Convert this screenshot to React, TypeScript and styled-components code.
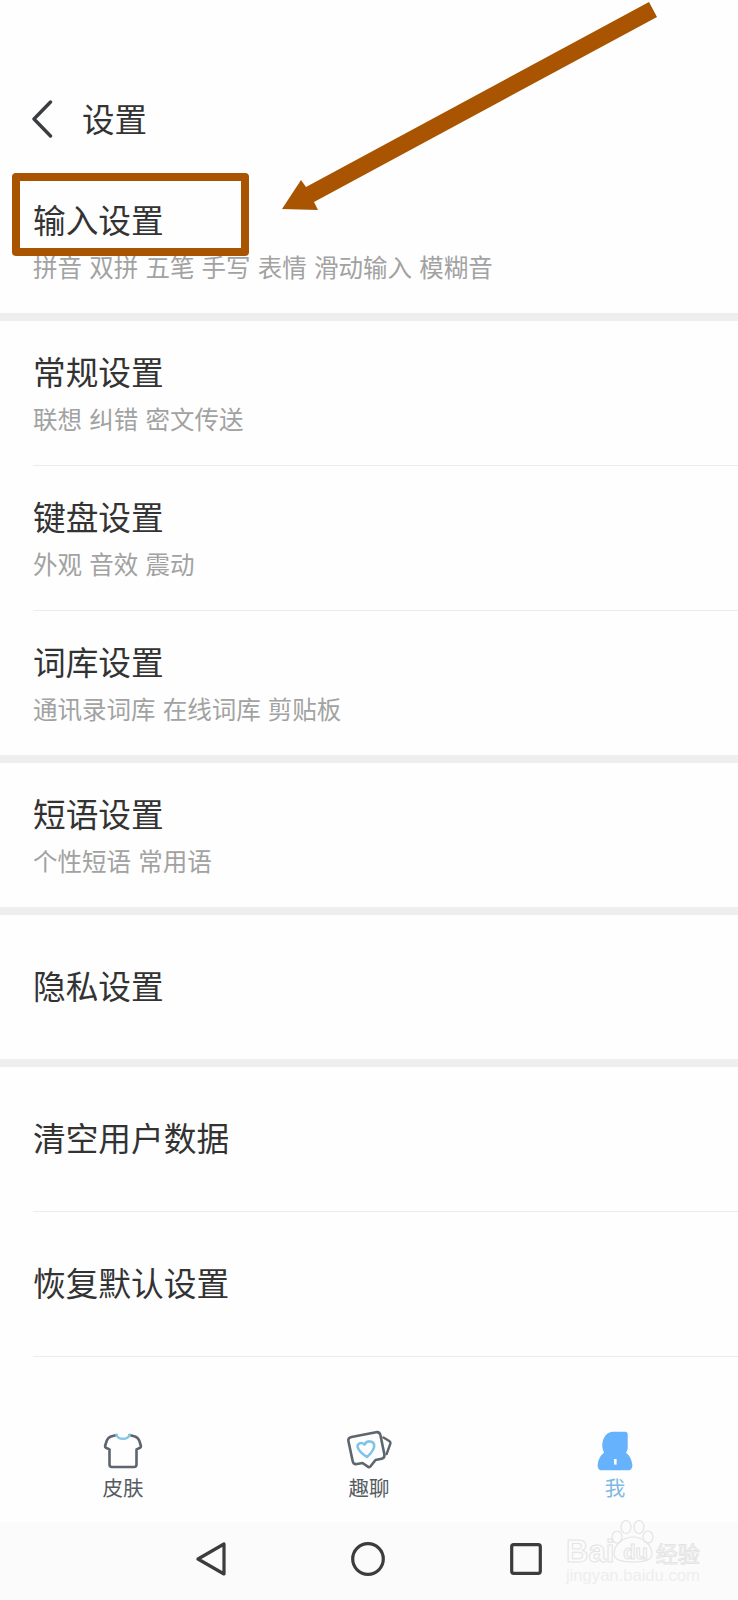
import styled, { createGlobalStyle } from 'styled-components';

interface ISettingRow {
  title: string;
  desc?: string;
}

const sections: ISettingRow[][] = [
  [{ title: '输入设置', desc: '拼音 双拼 五笔 手写 表情 滑动输入 模糊音' }],
  [
    { title: '常规设置', desc: '联想 纠错 密文传送' },
    { title: '键盘设置', desc: '外观 音效 震动' },
    { title: '词库设置', desc: '通讯录词库 在线词库 剪贴板' },
  ],
  [{ title: '短语设置', desc: '个性短语 常用语' }],
  [{ title: '隐私设置' }],
];

const lastSection: ISettingRow[] = [{ title: '清空用户数据' }, { title: '恢复默认设置' }];

const GlobalStyle = createGlobalStyle`
  html, body {
    margin: 0;
    padding: 0;
    background: #fff;
  }
  * {
    box-sizing: border-box;
  }
`;

const Page = styled.div`
  position: relative;
  width: 738px;
  height: 1600px;
  overflow: hidden;
  background: #fefefe;
  font-family: "Noto Sans CJK SC", "Noto Sans", sans-serif;
`;

const Header = styled.header`
  display: flex;
  align-items: center;
  gap: 29px;
  height: 169px;
  padding: 69px 0 0 31px;
  color: #333;
`;

const HeaderTitle = styled.h1`
  margin: 0 0 2px;
  font-size: 32.5px;
  font-weight: 400;
  line-height: 40px;
  color: #333;
`;

const Section = styled.section<{ $thick: boolean }>`
  border-bottom: ${props => (props.$thick ? '8px solid #eeeeee' : 'none')};
`;

const Row = styled.div<{ $single: boolean }>`
  display: flex;
  flex-direction: column;
  justify-content: center;
  height: 144px;
  padding: ${props => (props.$single ? '0 0 5px 33px' : '4px 0 0 33px')};
`;

const RowTitle = styled.div`
  font-size: 32.7px;
  line-height: 48px;
  color: #333;
`;

const RowDesc = styled.div`
  margin-top: -1px;
  font-size: 24.5px;
  line-height: 50px;
  color: #a2a2a2;
  word-spacing: 1.7px;
`;

const Rule = styled.div`
  height: 1px;
  margin-left: 33px;
  background: #ececec;
`;

const TabBar = styled.nav`
  display: grid;
  grid-template-columns: repeat(3, 246px);
  height: 165px;
  padding-top: 73px;
`;

const Tab = styled.div<{ $active?: boolean }>`
  display: flex;
  flex-direction: column;
  align-items: center;
  color: ${props => (props.$active ? '#7db9e2' : '#555b61')};
`;

const TabIcon = styled.div`
  display: flex;
  align-items: center;
  justify-content: center;
  height: 42px;
`;

const TabLabel = styled.span`
  font-size: 20.5px;
  line-height: 30px;
`;

const NavBar = styled.div`
  display: flex;
  align-items: center;
  justify-content: center;
  gap: 125px;
  height: 78px;
  padding-bottom: 4px;
  background: #fbfbfb;
`;

const Annotation = styled.div`
  position: absolute;
  left: 12px;
  top: 173px;
  width: 237px;
  height: 83px;
  border: 8px solid #a85400;
  border-radius: 4px;
`;

const Arrow = styled.svg`
  position: absolute;
  left: 270px;
  top: 0;
`;

const Watermark = styled.div`
  position: absolute;
  left: 566px;
  top: 1520px;
  width: 134px;
  font-family: "Liberation Sans", Arial, sans-serif;
  color: #fbfbfb;
  -webkit-text-stroke: 1px #e4e4e4;
`;

const Paw = styled.svg`
  position: absolute;
  left: 44px;
  top: 0;
`;

const WatermarkBrand = styled.div`
  display: flex;
  align-items: center;
  height: 44px;
  padding-top: 19px;
  font-size: 31px;
  line-height: 26px;
  font-weight: 700;
`;

const WatermarkDu = styled.span`
  position: relative;
  font-size: 20px;
  margin: 0 8px 0 9px;
`;

const WatermarkCjk = styled.span`
  font-family: "Noto Sans CJK SC", sans-serif;
  font-size: 22px;
  font-weight: 400;
`;

const WatermarkUrl = styled.div`
  margin-top: 3px;
  font-size: 16.6px;
  line-height: 18px;
  white-space: nowrap;
  color: #eeeeee;
  -webkit-text-stroke: 0;
`;

function BackIcon() {
  return (
    <svg width="22" height="38" viewBox="0 0 22 38" fill="none">
      <path d="M19.5 2 L3 19 L19.5 36" stroke="#3a3d42" strokeWidth="3.4" strokeLinecap="round" strokeLinejoin="round" />
    </svg>
  );
}

function ShirtIcon() {
  return (
    <svg width="40" height="38" viewBox="0 0 40 38" fill="none">
      <path
        d="M13.5 3 L8 4.4 C6 5 4.6 6.5 3.8 8.5 L2.2 13.5 C1.9 14.7 2.4 15.6 3.4 16 L6.5 17.4 L6.5 32.5 C6.5 34 7.3 35 9 35 L31 35 C32.7 35 33.5 34 33.5 32.5 L33.5 17.4 L36.6 16 C37.6 15.6 38.1 14.7 37.8 13.5 L36.2 8.5 C35.4 6.5 34 5 32 4.4 L26.5 3"
        stroke="#5d666f"
        strokeWidth="2.6"
        strokeLinejoin="round"
        strokeLinecap="round"
      />
      <path d="M13.5 3 C15 8 25 8 26.5 3" stroke="#86c8e8" strokeWidth="2.6" strokeLinecap="round" />
    </svg>
  );
}

function ChatIcon() {
  return (
    <svg width="46" height="42" viewBox="0 0 46 42" fill="none">
      <path
        d="M5.5 7 L30 2.2 C32.4 1.8 33.8 2.7 34.4 5 L38.4 24.5 C38.8 26.8 38 28.2 35.7 28.7 L29.5 30 L24.4 36.5 C23.8 37.2 23 37.3 22.2 36.8 L16.5 33 L11 34 C8.6 34.4 7.2 33.4 6.7 31.2 L2.4 11 C1.9 8.8 3.2 7.5 5.5 7 Z"
        stroke="#5d666f"
        strokeWidth="2.6"
        strokeLinejoin="round"
      />
      <path d="M37.5 7.5 L43.2 11 C44.4 11.8 44.7 12.7 44.3 13.9 L40.6 24" stroke="#5d666f" strokeWidth="2.4" strokeLinecap="round" strokeLinejoin="round" />
      <path
        d="M21 27 C16.5 24 12.5 20.5 11.7 17.2 C10.9 13.6 15.1 11.4 18.5 14.6 C20.7 10.2 27.1 10.6 28.1 14.4 C28.9 18 25.5 23 21 27 Z"
        stroke="#7fc4e8"
        strokeWidth="2.6"
        strokeLinejoin="round"
      />
    </svg>
  );
}

function PersonIcon() {
  return (
    <svg width="36" height="40" viewBox="0 0 36 40">
      <path
        d="M5.3 13.3 C5.8 6 10 0.7 16.3 0.7 L28 0.7 C29.8 0.7 30.7 1.6 30.7 3.3 L30.7 16.7 C30.7 18.5 30 20.2 29 21.7 C31.5 23.5 34.5 27 35.3 33.5 C35.7 37 34 39.3 31.3 39.3 L4.7 39.3 C2 39.3 0.3 37 0.7 33.5 C1.5 27 4.5 23.5 7 21.7 C5.8 19 5 16 5.3 13.3 Z"
        fill="#66b2fc"
      />
      <rect x="17" y="28" width="2.6" height="5.6" fill="#fff" />
    </svg>
  );
}

function NavBack() {
  return (
    <svg width="30" height="34" viewBox="0 0 30 34" fill="none">
      <path d="M2 17 L28 2 L28 32 Z" stroke="#3c3c3c" strokeWidth="3.2" strokeLinejoin="round" />
    </svg>
  );
}

function NavHome() {
  return (
    <svg width="34" height="34" viewBox="0 0 34 34" fill="none">
      <circle cx="17" cy="17" r="15.3" stroke="#3c3c3c" strokeWidth="3.2" />
    </svg>
  );
}

function NavRecent() {
  return (
    <svg width="32" height="32" viewBox="0 0 32 32" fill="none">
      <rect x="1.7" y="1.7" width="28.6" height="28.6" rx="2" stroke="#3c3c3c" strokeWidth="3.2" />
    </svg>
  );
}

export default function App() {
  return (
    <Page>
      <GlobalStyle />
      <Header>
        <BackIcon />
        <HeaderTitle>设置</HeaderTitle>
      </Header>
      {sections.map((rows: ISettingRow[]) => (
        <Section $thick key={rows[0].title}>
          {rows.map((row: ISettingRow, index: number) => (
            <div key={row.title}>
              {index > 0 && <Rule />}
              <Row $single={!row.desc}>
                <RowTitle>{row.title}</RowTitle>
                {row.desc && <RowDesc>{row.desc}</RowDesc>}
              </Row>
            </div>
          ))}
        </Section>
      ))}
      <Section $thick={false}>
        {lastSection.map((row: ISettingRow) => (
          <div key={row.title}>
            <Row $single>
              <RowTitle>{row.title}</RowTitle>
            </Row>
            <Rule />
          </div>
        ))}
      </Section>
      <TabBar>
        <Tab>
          <TabIcon><ShirtIcon /></TabIcon>
          <TabLabel>皮肤</TabLabel>
        </Tab>
        <Tab>
          <TabIcon><ChatIcon /></TabIcon>
          <TabLabel>趣聊</TabLabel>
        </Tab>
        <Tab $active>
          <TabIcon><PersonIcon /></TabIcon>
          <TabLabel>我</TabLabel>
        </Tab>
      </TabBar>
      <NavBar>
        <NavBack />
        <NavHome />
        <NavRecent />
      </NavBar>

      <Annotation />
      <Arrow width="400" height="220" viewBox="0 0 400 220">
        <polygon points="379,2 387,17 44,202 48,210 12,209 31,180 36,187" fill="#a85400" />
      </Arrow>

      <Watermark>
        <Paw width="46" height="44" viewBox="0 0 46 44" fill="none" stroke="#e4e4e4" strokeWidth="1.2">
          <ellipse cx="7" cy="17" rx="5" ry="6" />
          <ellipse cx="16" cy="7" rx="5" ry="6.5" />
          <ellipse cx="29" cy="7" rx="5" ry="6.5" />
          <ellipse cx="38" cy="17" rx="5" ry="6" />
          <path d="M4 34 C4 24 14 17 23 17 C32 17 42 24 42 34 C42 41 30 42 23 42 C16 42 4 41 4 34 Z" />
        </Paw>
        <WatermarkBrand>
          Bai
          <WatermarkDu>du</WatermarkDu>
          <WatermarkCjk>经验</WatermarkCjk>
        </WatermarkBrand>
        <WatermarkUrl>jingyan.baidu.com</WatermarkUrl>
      </Watermark>
    </Page>
  );
}
